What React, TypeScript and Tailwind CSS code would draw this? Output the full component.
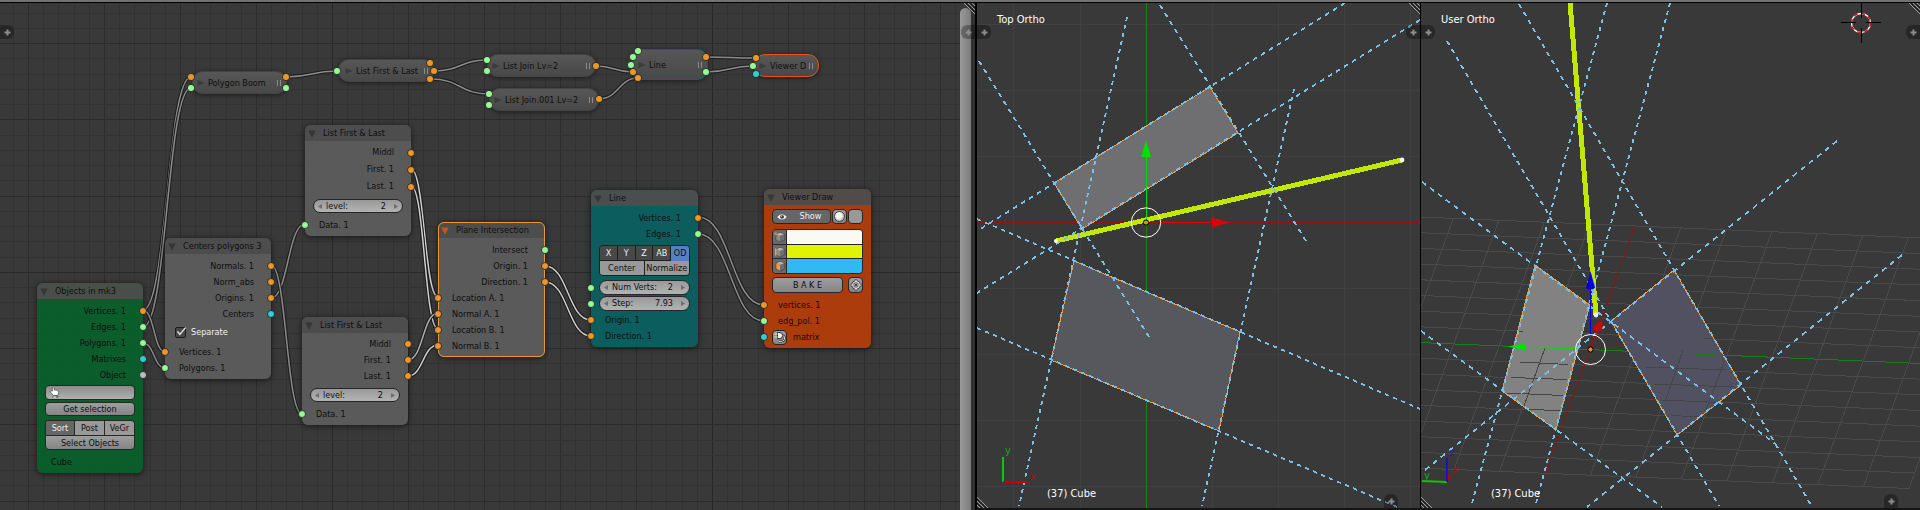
import type { ReactNode } from "react";
import { FaHandPointUp } from "react-icons/fa";

type Pt = [number, number];
type Seg = [number, number, number, number];

const ORANGE = "#e8992e";
const GREEN = "#97fb97";
const CYAN = "#35cdd0";
const GREY = "#bdbdbd";

/* ---------- node editor backdrop ---------- */

function NodeGrid() {
  const cols = Array.from({ length: 66 }, (_, i) => i - 2);
  const rows = Array.from({ length: 40 }, (_, i) => i - 4);
  const shade = (i: number) => (i % 25 === 0 ? "#282828" : i % 5 === 0 ? "#2c2c2c" : "#323232");
  const order = (a: number, b: number) => Number(a % 5 === 0) - Number(b % 5 === 0);
  return (
    <g shapeRendering="crispEdges">
      {[...cols].sort(order).map((i) => (
        <rect key={`c${i}`} x={Math.round(28 + i * 15.2)} y={0} width={1} height="100%" fill={shade(i - 20)} />
      ))}
      {[...rows].sort(order).map((i) => (
        <rect key={`r${i}`} x={0} y={Math.round(40 + i * 15.25)} width="100%" height={1} fill={shade(i - 15)} />
      ))}
    </g>
  );
}

type WireSpec = { from: Pt; to: Pt; tone: string };
const wires: WireSpec[] = [
  { from: [143, 310], to: [191, 77], tone: "#8c8c8c" },
  { from: [143, 327], to: [191, 88], tone: "#8c8c8c" },
  { from: [143, 310], to: [165, 352], tone: "#8c8c8c" },
  { from: [143, 343], to: [165, 368], tone: "#8c8c8c" },
  { from: [271, 298], to: [305, 224], tone: "#8c8c8c" },
  { from: [271, 265], to: [302, 414], tone: "#8c8c8c" },
  { from: [411, 169], to: [438, 297], tone: "#cfcfcf" },
  { from: [411, 186], to: [438, 329], tone: "#cfcfcf" },
  { from: [408, 360], to: [438, 313], tone: "#b0b0b0" },
  { from: [408, 376], to: [438, 345], tone: "#cfcfcf" },
  { from: [545, 266], to: [591, 320], tone: "#cfcfcf" },
  { from: [545, 282], to: [591, 336], tone: "#cfcfcf" },
  { from: [698, 217], to: [764, 305], tone: "#8c8c8c" },
  { from: [698, 234], to: [764, 321], tone: "#8c8c8c" },
  { from: [286, 77], to: [337, 71], tone: "#8c8c8c" },
  { from: [434, 71], to: [487, 60], tone: "#8c8c8c" },
  { from: [431, 79], to: [489, 94], tone: "#8c8c8c" },
  { from: [596, 66], to: [633, 72], tone: "#8c8c8c" },
  { from: [599, 99], to: [638, 78], tone: "#8c8c8c" },
  { from: [706, 57], to: [756, 58], tone: "#8c8c8c" },
  { from: [706, 72], to: [753, 66], tone: "#8c8c8c" },
];

function Wire({ from, to, tone }: WireSpec) {
  const h = (to[0] - from[0]) / 2;
  const d = `M${from[0]} ${from[1]}C${from[0] + h} ${from[1]} ${to[0] - h} ${to[1]} ${to[0]} ${to[1]}`;
  return (
    <g fill="none">
      <path d={d} stroke="#1c1c1c" strokeWidth={3.6} />
      <path d={d} stroke={tone} strokeWidth={1.5} />
    </g>
  );
}

const foldedSockets: [number, number, string][] = [
  [191, 77, ORANGE], [191, 88, GREEN], [286, 77, ORANGE], [286, 88, GREEN],
  [337, 71, GREEN], [430, 63, ORANGE], [434, 71, ORANGE], [430, 79, ORANGE],
  [487, 60, GREEN], [487, 71, GREEN], [596, 66, ORANGE],
  [489, 94, GREEN], [489, 105, GREEN], [599, 99, ORANGE],
  [638, 51, GREEN], [633, 57, GREEN], [631, 65, GREEN], [633, 72, ORANGE], [638, 78, ORANGE],
  [706, 57, ORANGE], [706, 72, GREEN],
  [756, 58, ORANGE], [753, 66, GREEN], [756, 74, CYAN],
];

/* ---------- node parts ---------- */

function Socket({ tone, side }: { tone: string; side: "in" | "out" }) {
  return (
    <svg
      className={`absolute top-1/2 size-2 -translate-y-1/2 ${side === "in" ? "-left-1" : "-right-1"}`}
      viewBox="0 0 8 8"
    >
      <circle cx={4} cy={4} r={3.5} fill={tone} stroke="#1b1b1b" strokeWidth={0.8} />
    </svg>
  );
}

function Out({ tone, children, tall }: { tone: string; children: ReactNode; tall?: boolean }) {
  return (
    <div className={`relative flex items-center justify-end pr-[17px] ${tall ? "h-[17px]" : "h-4"}`}>
      {children}
      <Socket tone={tone} side="out" />
    </div>
  );
}

function In({ tone, children }: { tone: string; children: ReactNode }) {
  return (
    <div className="relative flex h-4 items-center pl-[14px]">
      {children}
      <Socket tone={tone} side="in" />
    </div>
  );
}

function Node({ title, place, body, frame, mark, children }: {
  title: string; place: string; body: string; frame?: string; mark?: string; children: ReactNode;
}) {
  return (
    <section
      className={`absolute rounded-md pb-[3px] shadow-[0_1px_6px_rgba(0,0,0,0.6)] ${place} ${body} ${frame ?? ""}`}
    >
      <header className="flex h-4 items-center rounded-t-md bg-[#4d4d4d]/95 pt-px">
        <button type="button" aria-label={`Collapse ${title}`} className="flex w-[18px] justify-center pr-1">
          <svg className="h-2 w-2" viewBox="0 0 8 8">
            <path d="M0.3 0.5h7.4L4 7.8z" fill={mark ?? "#363636"} />
          </svg>
        </button>
        <h2>{title}</h2>
      </header>
      {children}
    </section>
  );
}

function Folded({ title, place, border }: { title: string; place: string; border?: string }) {
  return (
    <section
      className={`absolute flex items-center rounded-[11px] border bg-linear-to-b from-[#575757] to-[#484848] pt-px pr-[5px] shadow-[0_1px_5px_rgba(0,0,0,0.5)] ${place} ${border ?? "border-[#444]"}`}
    >
      <button type="button" aria-label={`Expand ${title}`} className="flex w-[15px] shrink-0 justify-center pl-px">
        <svg className="h-2 w-2" viewBox="0 0 8 8">
          <path d="M0.5 1L7.6 4L0.5 7z" fill="#3b3b3b" />
        </svg>
      </button>
      <h2 className="grow overflow-hidden">{title}</h2>
      <span className="h-[6px] w-1 border-x border-[#8a8a8a]" />
    </section>
  );
}

function NumField({ id, label, value, size }: { id: string; label: string; value: string; size: string }) {
  return (
    <div
      className={`mx-2 flex items-center rounded-full border border-[#262626] bg-linear-to-b from-[#999] to-[#b3b3b3] px-1 ${size}`}
    >
      <svg className="h-[5px] w-1 shrink-0" viewBox="0 0 4 5"><path d="M4 0v5L0 2.5z" fill="#6d6d6d" /></svg>
      <label htmlFor={id} className="shrink-0 pl-1">{label}</label>
      <input id={id} defaultValue={value} className="w-0 min-w-0 grow bg-transparent pr-2 text-right outline-none" />
      <svg className="h-[5px] w-1 shrink-0" viewBox="0 0 4 5"><path d="M0 0v5l4-2.5z" fill="#6d6d6d" /></svg>
    </div>
  );
}

function ListNode({ id, place, tall }: { id: string; place: string; tall?: boolean }) {
  return (
    <Node title="List First & Last" place={place} body="bg-[#5c5c5c]/95">
      <div className="pt-[3px]">
        <Out tone={ORANGE} tall={tall}>Middl</Out>
        <Out tone={ORANGE} tall={tall}>First. 1</Out>
        <Out tone={ORANGE} tall={tall}>Last. 1</Out>
      </div>
      <div className="py-1">
        <NumField id={id} label="level:" value="2" size="h-[14px]" />
      </div>
      <In tone={GREEN}>Data. 1</In>
    </Node>
  );
}

function CubeIcon({ part }: { part: "vertex" | "edge" | "face" }) {
  return (
    <svg className="size-3 shrink-0" viewBox="0 0 12 12">
      <path d="M6 1.2L10.8 3L6 4.9L2 3.2z" fill="#b4b4b4" />
      <path d="M2 3.2L6 4.9V11L2 9z" fill={part === "face" ? "#f79a3c" : "#8c8c8c"} />
      <path d="M6 4.9L10.8 3V9L6 11z" fill="#6f6f6f" />
      <path d="M6 1.2L10.8 3V9L6 11L2 9V3.2z" fill="none" stroke="#333" strokeWidth={0.5} />
      {part === "vertex" && <circle cx={1.7} cy={2.8} r={1.4} fill="#f08a24" />}
      {part === "edge" && <path d="M1.7 2.6V9.4" stroke="#f0a04a" strokeWidth={1.6} />}
    </svg>
  );
}

const greyButton = "border border-[#262626] bg-linear-to-b from-[#9e9e9e] to-[#858585]";
const cubeButton = "flex w-[14px] items-center justify-center border-r border-[#262626] bg-[#6a6a6a]";

function NodeEditor() {
  return (
    <main className="relative min-w-0 flex-[971] overflow-hidden bg-[#393939]">
      <svg className="absolute inset-0 size-full" aria-hidden="true">
        <NodeGrid />
        <g transform="translate(0 -3)">
          {wires.map((w, i) => <Wire key={i} {...w} />)}
        </g>
      </svg>

      <Folded title="Polygon Boom" place="left-[192px] top-[68px] h-[23px] w-[95px]" />
      <Folded title="List First & Last" place="left-[338px] top-[56px] h-[23px] w-[96px] pl-[2px]" />
      <Folded title="List Join Lv=2" place="left-[487px] top-[51px] h-[23px] w-[109px]" />
      <Folded title="List Join.001 Lv=2" place="left-[489px] top-[85px] h-[23px] w-[110px]" />
      <Folded title="Line" place="left-[631px] top-[46px] h-[31px] w-[77px] pl-[2px]" border="border-[#0f6466]" />
      <Folded title="Viewer D" place="left-[754px] top-[51px] h-[23px] w-[65px]" border="border-[#e8501c]" />

      <Node title="Objects in mk3" place="left-[37px] top-[280px] w-[106px]" body="bg-[#0a5f2b]/95">
        <div className="pt-1">
          <Out tone={ORANGE}>Vertices. 1</Out>
          <Out tone={GREEN}>Edges. 1</Out>
          <Out tone={GREEN}>Polygons. 1</Out>
          <Out tone={CYAN}>Matrixes</Out>
          <Out tone={GREY}>Object</Out>
        </div>
        <div className="mx-2 mt-[2px] flex flex-col">
          <label className="relative flex h-[15px] items-center rounded-sm border border-[#262626] bg-linear-to-b from-[#8c8c8c] to-[#b0b0b0]">
            <FaHandPointUp className="ml-[3px] size-[11px] shrink-0 fill-white stroke-[#333] stroke-[30px]" aria-hidden="true" />
            <input aria-label="Group" className="w-0 min-w-0 grow bg-transparent outline-none" />
          </label>
          <button type="button" className={`mt-[2px] h-[14px] rounded-sm leading-3 ${greyButton}`}>Get selection</button>
          <div className="mt-1 flex h-[15px] overflow-hidden rounded-t-sm border border-b-0 border-[#262626] bg-[#999]">
            <button type="button" className="flex-[29] bg-[#666] text-[#eee]">Sort</button>
            <button type="button" className="flex-[30] border-x border-[#262626]">Post</button>
            <button type="button" className="flex-[30]">VeGr</button>
          </div>
          <button type="button" className={`h-[15px] rounded-b-sm leading-3 ${greyButton}`}>Select Objects</button>
        </div>
        <p className="mt-1 flex h-4 items-center pl-[14px]">Cube</p>
      </Node>

      <Node title="Centers polygons 3" place="left-[165px] top-[235px] w-[106px]" body="bg-[#5c5c5c]/95">
        <div className="pt-1">
          <Out tone={ORANGE}>Normals. 1</Out>
          <Out tone={ORANGE}>Norm_abs</Out>
          <Out tone={ORANGE}>Origins. 1</Out>
          <Out tone={CYAN}>Centers</Out>
        </div>
        <label className="mb-[2px] flex h-5 items-center gap-[5px] pl-[10px] text-[#f0f0f0]">
          <span className="relative flex">
            <input
              type="checkbox"
              defaultChecked
              className="peer size-[11px] appearance-none rounded-xs border border-[#1c1c1c] bg-[#484848]"
            />
            <svg className="pointer-events-none invisible absolute -top-px left-0 size-3 peer-checked:visible" viewBox="0 0 12 12">
              <path d="M2.4 5.4L4.8 8.4L10.6 1.6" fill="none" stroke="#e6e6e6" strokeWidth={1.4} />
            </svg>
          </span>
          Separate
        </label>
        <In tone={ORANGE}>Vertices. 1</In>
        <In tone={GREEN}>Polygons. 1</In>
      </Node>

      <ListNode id="level-a" place="left-[305px] top-[122px] w-[106px]" tall />
      <ListNode id="level-b" place="left-[302px] top-[314px] w-[106px]" />

      <Node
        title="Plane Intersection"
        place="left-[438px] top-[219px] w-[107px]"
        body="bg-[#5c5c5c]/95"
        frame="outline-1 -outline-offset-1 outline-[#e8992e]"
        mark="#c9551a"
      >
        <div className="pt-1">
          <Out tone={GREEN}>Intersect</Out>
          <Out tone={ORANGE}>Origin. 1</Out>
          <Out tone={ORANGE}>Direction. 1</Out>
        </div>
        <In tone={ORANGE}>Location A. 1</In>
        <In tone={ORANGE}>Normal A. 1</In>
        <In tone={ORANGE}>Location B. 1</In>
        <In tone={ORANGE}>Normal B. 1</In>
      </Node>

      <Node title="Line" place="left-[591px] top-[187px] w-[107px]" body="bg-[#0a5f5f]/95">
        <div className="pt-1">
          <Out tone={ORANGE}>Vertices. 1</Out>
          <Out tone={GREEN}>Edges. 1</Out>
        </div>
        <div className="mx-2 mt-[3px] mb-1 overflow-hidden rounded-sm border border-[#1e1e1e]">
          <div className="grid h-[14px] grid-cols-5 divide-x divide-[#1e1e1e] bg-[#484848] text-[#eee]">
            <button type="button">X</button>
            <button type="button">Y</button>
            <button type="button">Z</button>
            <button type="button">AB</button>
            <button type="button" className="bg-[#5680c2] text-[#111]">OD</button>
          </div>
          <div className="grid h-[15px] grid-cols-2 divide-x divide-[#1e1e1e] border-t border-[#1e1e1e] bg-[#999]">
            <button type="button">Center</button>
            <button type="button">Normalize</button>
          </div>
        </div>
        <div className="relative mb-px">
          <NumField id="num-verts" label="Num Verts:" value="2" size="h-[15px]" />
          <Socket tone={GREEN} side="in" />
        </div>
        <div className="relative mb-px">
          <NumField id="step" label="Step:" value="7.93" size="h-[15px]" />
          <Socket tone={GREEN} side="in" />
        </div>
        <In tone={ORANGE}>Origin. 1</In>
        <In tone={ORANGE}>Direction. 1</In>
      </Node>

      <Node title="Viewer Draw" place="left-[764px] top-[186px] w-[107px]" body="bg-[#b33c0b]/95">
        <div className="mx-2 flex h-[19px] gap-px pt-1">
          <button type="button" className="flex grow items-center rounded-sm border border-[#262626] bg-[#666] text-[#eee]">
            <svg className="ml-1 h-2 w-[10px]" viewBox="0 0 10 8">
              <path d="M0.2 4Q5-1.6 9.8 4Q5 9 0.2 4z" fill="#f4f4f4" />
              <circle cx={5} cy={3.8} r={1.9} fill="#333" />
              <circle cx={4.4} cy={3.1} r={0.7} fill="#fff" />
            </svg>
            <span className="grow pl-1">Show</span>
          </button>
          <button type="button" aria-label="Shading" className={`flex w-[15px] items-center justify-center rounded-sm ${greyButton}`}>
            <span className="size-[11px] shrink-0 rounded-full border border-[#444] bg-radial-[at_40%_35%] from-white from-30% to-[#8a8a8a]" />
          </button>
          <button type="button" aria-label="Transparent" className="w-[15px] rounded-sm border border-[#262626] bg-[#999]" />
        </div>
        <div className="mx-2 mt-[5px] flex h-[45px] flex-col divide-y divide-[#262626] overflow-hidden rounded-sm border border-[#262626]">
          <div className="flex flex-1">
            <button type="button" aria-label="Show vertices" className={cubeButton}><CubeIcon part="vertex" /></button>
            <button type="button" aria-label="Vertex color" className="grow bg-[#fafaf5]" />
          </div>
          <div className="flex flex-1">
            <button type="button" aria-label="Show edges" className={cubeButton}><CubeIcon part="edge" /></button>
            <button type="button" aria-label="Edge color" className="grow bg-[#e0f300]" />
          </div>
          <div className="flex flex-1">
            <button type="button" aria-label="Show faces" className={cubeButton}><CubeIcon part="face" /></button>
            <button type="button" aria-label="Face color" className="grow bg-[#32b8f2]" />
          </div>
        </div>
        <div className="mx-2 mt-[3px] mb-1 flex h-4 justify-between">
          <button type="button" className={`w-[71px] rounded-sm ${greyButton}`}>B A K E</button>
          <button type="button" aria-label="Update view" className={`flex w-[15px] items-center justify-center rounded-sm ${greyButton}`}>
            <svg className="size-3 shrink-0" viewBox="0 0 12 12">
              <path d="M6 0.6V11.4M0.6 6H11.4" stroke="#333" strokeWidth={2.4} />
              <circle cx={6} cy={6} r={3.4} fill="#999" stroke="#333" strokeWidth={2.4} />
              <path d="M6 0.9V3.4M6 8.6V11.1M0.9 6H3.4M8.6 6H11.1" stroke="#eee" strokeWidth={1.2} />
              <circle cx={6} cy={6} r={3.2} fill="none" stroke="#eee" strokeWidth={1.1} />
              <circle cx={6} cy={6} r={1} fill="#333" />
            </svg>
          </button>
        </div>
        <In tone={ORANGE}>vertices. 1</In>
        <In tone={GREEN}>edg_pol. 1</In>
        <div className="relative flex h-4 items-center gap-[6px] pl-2">
          <button type="button" aria-label="Matrix input" className={`flex size-[15px] items-center justify-center rounded-sm ${greyButton}`}>
            <svg className="size-3 shrink-0" viewBox="0 0 12 12">
              <path d="M3.5 1.5H6Q8.6 2 8.6 4.6Q8.6 7.4 6 7.6H3.5z" fill="#eee" stroke="#222" strokeWidth={0.9} />
              <path d="M0.5 3H3.5M0.5 6H3.5" stroke="#f5e9a8" strokeWidth={1.1} />
              <path d="M8.6 4.6Q11.2 5 10.6 8Q9.8 10.8 4.6 10.4" fill="none" stroke="#222" strokeWidth={2} />
              <path d="M8.6 4.6Q11.2 5 10.6 8Q9.8 10.8 4.6 10.4" fill="none" stroke="#ddd" strokeWidth={1} />
            </svg>
          </button>
          matrix
          <Socket tone={CYAN} side="in" />
        </div>
      </Node>

      <svg className="pointer-events-none absolute inset-0 size-full" aria-hidden="true">
        <g transform="translate(0 -3)" stroke="#1b1b1b" strokeWidth={0.8}>
          {foldedSockets.map(([x, y, tone]) => <circle key={`${x}-${y}`} cx={x} cy={y} r={3.6} fill={tone} />)}
        </g>
      </svg>
      <div className="absolute top-[5px] right-0 bottom-0 w-[11px] rounded-t-full bg-linear-to-r from-[#9a9a9a] to-[#7c7c7c]" />
      <PlusTab place="left-0 top-[22px] rounded-r-md" />
    </main>
  );
}

/* ---------- 3D viewports ---------- */

function PlusTab({ place }: { place: string }) {
  return (
    <button
      type="button"
      aria-label="Open region"
      className={`absolute flex size-[14px] items-center justify-center bg-black/30 ${place}`}
    >
      <svg className="size-[7px]" viewBox="0 0 7 7">
        <path d="M3.5 0.5V6.5M0.5 3.5H6.5" stroke="#8c8c8c" strokeWidth={2} />
      </svg>
    </button>
  );
}

function CornerGrip({ place }: { place: string }) {
  return (
    <svg className={`pointer-events-none absolute size-3 ${place}`} viewBox="0 0 12 12" aria-hidden="true">
      <path d="M1 0L12 11M5 0L12 7M9 0L12 3" stroke="#a0a0a0" strokeWidth={1} />
      <path d="M3 0L12 9M7 0L12 5" stroke="#151515" strokeWidth={1} />
    </svg>
  );
}

function Stippled({ s, width = 1.8 }: { s: Seg; width?: number }) {
  const [x1, y1, x2, y2] = s;
  const dx = Math.abs(x2 - x1);
  const dy = Math.abs(y2 - y1);
  const run = (4 * Math.hypot(dx, dy)) / Math.max(dx, dy);
  return (
    <line x1={x1} y1={y1} x2={x2} y2={y2} stroke="#7cc0e6" strokeWidth={width} strokeDasharray={`${run} ${run}`} />
  );
}

const topLines: Seg[] = [
  [1345, 3, 977, 231], [1420, 20, 977, 293], [979, 61, 1149, 337], [1160, 5, 1306, 241],
  [1127, 17, 1019, 506], [1294, 89, 1202, 506], [977, 219, 1420, 409], [977, 328, 1397, 507],
];

function TopView() {
  const xs = [1013, 1080, 1212, 1278, 1344, 1410];
  const ys = [24, 90, 156, 288, 354, 420, 486];
  return (
    <section aria-label="Top view" className="relative min-w-0 flex-[443] overflow-hidden bg-[#393939] text-[11px] text-white">
      <svg className="absolute inset-0 size-full" aria-hidden="true">
        <g transform="translate(-977 -3)">
          <g fill="#404040">
            {xs.map((x) => <rect key={x} x={x} y={3} width={1} height={505} />)}
            {ys.map((y) => <rect key={y} x={977} y={y} width={443} height={1} />)}
          </g>
          <rect x={977} y={222} width={443} height={1} fill="#8e1414" />
          <rect x={1146} y={3} width={1} height={505} fill="#0f8a0f" />
          <g strokeWidth={1} stroke="#f0a040" shapeRendering="crispEdges">
            <path d="M1054 183L1210 87L1238 133L1082 229z" fill="#6f6f71" />
            <path d="M1074 261L1240 332L1219 431L1051 360z" fill="#57585d" />
          </g>
          <g shapeRendering="crispEdges">
            <path d="M1056 241L1402 160" stroke="#c0e800" strokeWidth={5} />
            {topLines.map((s, i) => <Stippled key={i} s={s} />)}
          </g>
          <circle cx={1056} cy={241} r={2} fill="#fff" />
          <circle cx={1402} cy={160} r={2.4} fill="#f4f4f4" />
          <path d="M1146.5 222V156" stroke="#00dd00" />
          <path d="M1146 140L1151 157H1141z" fill="#00dd00" />
          <path d="M1161 222.5H1213" stroke="#e00000" />
          <path d="M1230 222.5L1212 217.5V227.5z" fill="#e00000" />
          <circle cx={1146} cy={222.5} r={14.7} fill="none" stroke="#fff" />
          <circle cx={1146} cy={222.5} r={2.6} fill="#d8923a" stroke="#000" />
          <path d="M1003 457V482" stroke="#0fc40f" strokeWidth={2} />
          <path d="M1003 482H1028" stroke="#c80000" strokeWidth={2} />
          <text x={1005} y={454} fill="#12a812">y</text>
          <text x={1030} y={480} fill="#a81212">x</text>
        </g>
      </svg>
      <h2 className="absolute top-[10px] left-5">Top Ortho</h2>
      <p className="absolute bottom-[7px] left-[70px]">(37) Cube</p>
      <CornerGrip place="top-0 right-0" />
      <CornerGrip place="bottom-0 left-0 rotate-180" />
      <PlusTab place="left-0 top-[22px] rounded-r-md" />
      <PlusTab place="right-0 top-[22px] rounded-l-md" />
      <PlusTab place="right-[22px] bottom-0 rounded-t-md" />
    </section>
  );
}

const userLines: Seg[] = [
  [1519, 4, 1811, 505], [1447, 41, 1719, 506], [1607, 3, 1471, 507], [1670, 3, 1535, 507],
  [1422, 182, 1777, 445], [1837, 141, 1425, 470], [1902, 255, 1587, 507], [1421, 331, 1662, 507],
];

const nearGrid: Seg[] = [
  [1520, 362, 1568, 364.5], [1511, 377.5, 1567, 379.5], [1507, 393, 1563, 395.5], [1528, 409, 1560, 411],
  [1545, 348, 1524, 406], [1518, 331, 1523, 331.5],
  [1704, 338, 1713, 338.5], [1646, 367, 1726, 370], [1654, 384, 1734, 387], [1662, 400, 1720, 402.5],
  [1671, 415.5, 1702, 417], [1683, 350, 1665, 402], [1726, 357, 1706, 410],
];

function UserView() {
  const top: Pt = [1635.3, 226];
  const end: Pt = [1545, 473.3];
  const u: Pt = [45.5, 1.9];
  const rows = Array.from({ length: 17 }, (_, j) => j);
  const cols = Array.from({ length: 17 }, (_, k) => k - 8);
  return (
    <section aria-label="User view" className="relative min-w-0 flex-[499] overflow-hidden bg-[#393939] text-[11px] text-white">
      <svg className="absolute inset-0 size-full" aria-hidden="true">
        <g transform="translate(-1421 -3)">
          <g shapeRendering="crispEdges">
            {rows.map((j) => {
              const x = top[0] + ((end[0] - top[0]) * j) / 16;
              const y = top[1] + ((end[1] - top[1]) * j) / 16;
              return (
                <line key={j} x1={x - 8 * u[0]} y1={y - 8 * u[1]} x2={x + 8 * u[0]} y2={y + 8 * u[1]} stroke={j === 8 ? "#158015" : "#4a4a4a"} />
              );
            })}
            {cols.map((k) => (
              <line key={k} x1={top[0] + k * u[0]} y1={top[1] + k * u[1]} x2={end[0] + k * u[0]} y2={end[1] + k * u[1]} stroke={k === 0 ? "#861616" : "#4a4a4a"} />
            ))}
          </g>
          <g strokeWidth={1} stroke="#f0a040" shapeRendering="crispEdges">
            <path d="M1535 265L1590 305L1556 430L1502 391z" fill="#828282" />
            <path d="M1674 270L1741 385L1677 435L1611 321z" fill="#515161" />
          </g>
          <g stroke="#454548" shapeRendering="crispEdges">
            {nearGrid.map(([x1, y1, x2, y2], i) => <line key={i} x1={x1} y1={y1} x2={x2} y2={y2} />)}
            <path d="M1676 353L1725 355.5" stroke="#158015" />
          </g>
          <g shapeRendering="crispEdges">
            <path d="M1570 3L1596 315" stroke="#c0e800" strokeWidth={5} />
            {userLines.map((s, i) => <Stippled key={i} s={s} />)}
          </g>
          <circle cx={1596} cy={315} r={2.4} fill="#f4f4f4" />
          <path d="M1590.5 335V288" stroke="#0000e0" />
          <path d="M1590.5 271L1595 288Q1590 291 1586 288z" fill="#0000dd" />
          <path d="M1577 348.5L1526 347.5" stroke="#00e000" />
          <path d="M1508 346.5L1526 343V351z" fill="#00e000" />
          <path d="M1591 349L1597 331" stroke="#c00000" />
          <path d="M1594 326L1600 321L1603 324L1602 330L1597 332L1594 330z" fill="#c80808" />
          <circle cx={1590.5} cy={349.5} r={15} fill="none" stroke="#fff" />
          <circle cx={1590.5} cy={349.5} r={2.6} fill="#d8923a" stroke="#000" />
          <circle cx={1861} cy={23} r={9.5} fill="none" stroke="#fff" strokeWidth={1.3} />
          <circle cx={1861} cy={23} r={9.5} fill="none" stroke="#e80000" strokeWidth={1.3} strokeDasharray="3.73 3.73" />
          <path d="M1841 22.5H1856M1866 22.5H1881M1861.5 3V18M1861.5 28V43" stroke="#000" />
          <path d="M1447 482L1450 474" stroke="#c80000" strokeWidth={2} />
          <path d="M1447 482L1422 481" stroke="#0fc40f" strokeWidth={2} />
          <path d="M1447 458V482" stroke="#1414d0" strokeWidth={2} />
          <text x={1449} y={456} fill="#2020b8">z</text>
          <text x={1453} y={473} fill="#a81212">x</text>
          <text x={1424} y={479} fill="#12a812">y</text>
        </g>
      </svg>
      <h2 className="absolute top-[10px] left-5">User Ortho</h2>
      <p className="absolute bottom-[7px] left-[70px]">(37) Cube</p>
      <CornerGrip place="top-0 right-0" />
      <CornerGrip place="bottom-0 left-0 rotate-180" />
      <PlusTab place="left-0 top-[22px] rounded-r-md" />
      <PlusTab place="right-0 top-[22px] rounded-l-md" />
      <PlusTab place="right-[22px] bottom-0 rounded-t-md" />
    </section>
  );
}

export default function App() {
  return (
    <div className="flex min-h-screen flex-col bg-[#393939] font-['DejaVu_Sans_Condensed','DejaVu_Sans',sans-serif] text-[9px] leading-[15px] whitespace-nowrap text-[#0e0e0e]">
      <div className="h-[3px] border-b border-black bg-[#727272]" />
      <div className="flex grow">
        <NodeEditor />
        <div className="relative w-[6px] border-r-2 border-black bg-[#303030]">
          <CornerGrip place="top-0 right-0" />
          <PlusTab place="top-[22px] right-0 rounded-l-md" />
        </div>
        <div className="flex min-w-0 flex-[943] border-b-2 border-[#151515] leading-[14px]">
          <TopView />
          <div className="w-px bg-black" />
          <UserView />
        </div>
      </div>
    </div>
  );
}
